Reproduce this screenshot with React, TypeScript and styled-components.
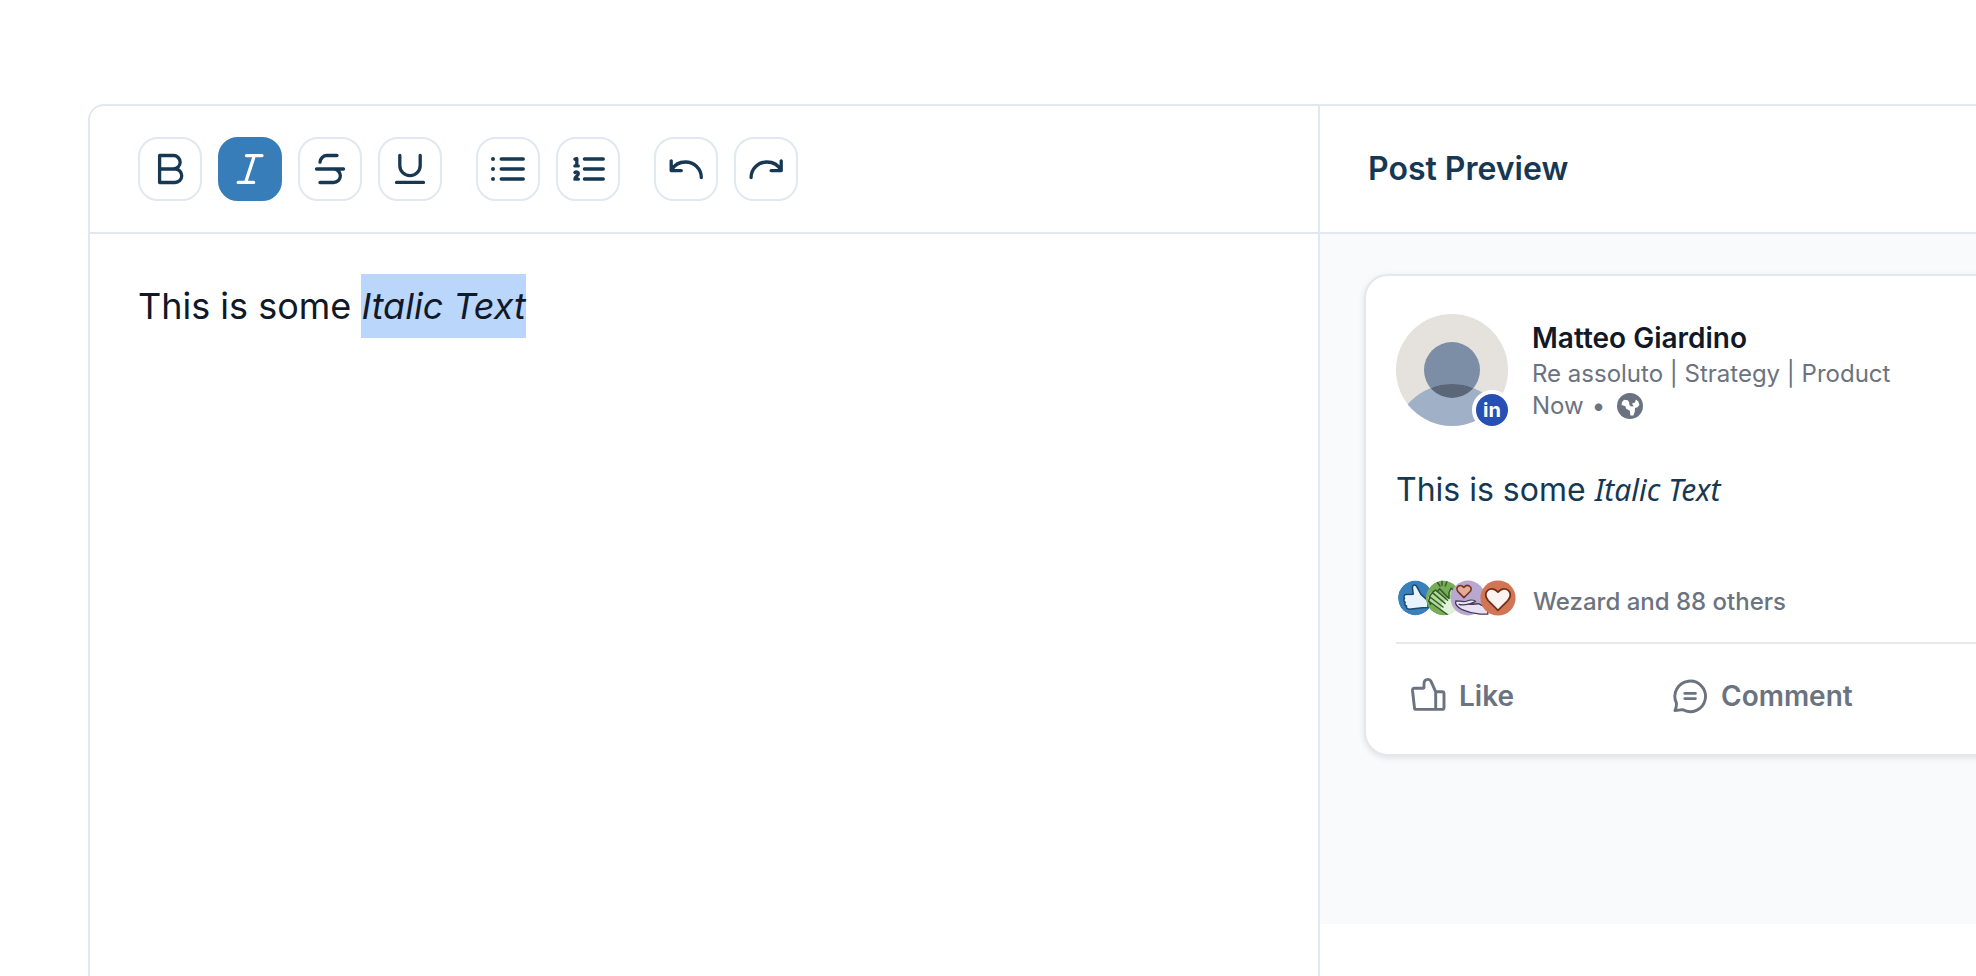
import React from "react";
import styled, { createGlobalStyle } from "styled-components";

const GlobalStyle = createGlobalStyle`
  *, *::before, *::after { box-sizing: border-box; }
  html, body, #root { height: 100%; }
  body {
    margin: 0;
    background: #ffffff;
    font-family: Inter, "Liberation Sans", sans-serif;
    color: #111827;
    overflow: hidden;
  }
  h2, p { margin: 0; }
  button { font: inherit; cursor: pointer; }
  svg { display: block; flex: none; }
`;

const Page = styled.main`
  min-height: 100vh;
  padding: 104px 0 0 88px;
  display: flex;
`;

const Workspace = styled.div`
  flex: 1;
  display: grid;
  grid-template-columns: minmax(0, 15fr) minmax(0, 8fr);
  border: 2px solid #e2e8f0;
  border-width: 2px 0 0 2px;
  border-top-left-radius: 16px;
`;

const EditorColumn = styled.section`
  border-right: 2px solid #e2e8f0;
`;

const PreviewColumn = styled.section`
  overflow: hidden;
`;

const Bar = styled.div`
  display: flex;
  align-items: center;
  gap: 34px;
  height: 128px;
  padding: 0 48px;
  border-bottom: 2px solid #e2e8f0;
`;

const ToolGroup = styled.div`
  display: flex;
  gap: 16px;
`;

const ToolButton = styled.button<{ $active?: boolean }>`
  display: grid;
  place-items: center;
  width: 64px;
  height: 64px;
  padding: 0;
  border: 2px solid ${(p) => (p.$active ? "#377dba" : "#e2e8f0")};
  border-radius: 20px;
  background: ${(p) => (p.$active ? "#377dba" : "#ffffff")};
  color: ${(p) => (p.$active ? "#ffffff" : "#163853")};
`;

const Editor = styled.div`
  padding: 40px 48px;
  font-size: 36px;
  line-height: 64px;
  outline: none;
`;

const Selected = styled.em`
  display: inline-block;
  background: #bad6fb;
`;

const Title = styled.h2`
  font-size: 32px;
  line-height: 40px;
  font-weight: 600;
  color: #163853;
`;

const PreviewArea = styled.div`
  height: 690px;
  padding: 40px 0 0 44px;
  background: #f8fafc;
`;

const Card = styled.article`
  margin-right: -32px;
  padding: 38px 30px 36px;
  border: 2px solid #e5e7eb;
  border-radius: 24px;
  background: #ffffff;
  box-shadow: 0 2px 6px rgba(0, 0, 0, 0.1);
`;

const Author = styled.header`
  display: flex;
  align-items: center;
  gap: 24px;
`;

const AvatarBox = styled.div`
  position: relative;
`;

const Badge = styled.span`
  position: absolute;
  right: -4px;
  bottom: -4px;
  display: grid;
  place-items: center;
  width: 40px;
  height: 40px;
  border: 4px solid #ffffff;
  border-radius: 50%;
  background: #2650b4;
  color: #ffffff;
  font-size: 20px;
  line-height: 24px;
  font-weight: 700;
`;

const Name = styled.p`
  font-size: 28px;
  line-height: 40px;
  font-weight: 600;
`;

const Meta = styled.p`
  display: flex;
  align-items: center;
  gap: 8px;
  font-size: 24px;
  line-height: 32px;
  color: #6b7280;

  svg {
    margin-left: 4px;
  }
`;

const PostText = styled.p`
  margin-top: 40px;
  font-size: 32px;
  line-height: 48px;
  color: #163853;
`;

const PostItalic = styled.em`
  font-family: "Noto Sans", sans-serif;
  font-size: 30px;
  line-height: 32px;
`;

const Reactions = styled.div`
  display: flex;
  gap: 16px;
  margin-top: 66px;
  padding: 0 0 18px 2px;
  border-bottom: 2px solid #e5e7eb;
  font-size: 24px;
  line-height: 44px;
  font-weight: 500;
  color: #6b7280;
`;

const Actions = styled.div`
  display: grid;
  grid-template-columns: repeat(2, 262px);
  padding: 30px 0 0 13px;
`;

const Action = styled.button`
  display: flex;
  align-items: center;
  gap: 12px;
  padding: 0;
  border: 0;
  background: none;
  color: #6b7280;
  font-size: 28px;
  line-height: 44px;
  font-weight: 600;
`;

function ToolIcon({ children }: { children: React.ReactNode }) {
  return (
    <svg width="40" height="40" viewBox="0 0 40 40" fill="none" stroke="currentColor" strokeWidth="3.3" strokeLinecap="round" strokeLinejoin="round" aria-hidden="true">
      {children}
    </svg>
  );
}

const groups = [
  [
    { label: "Bold", icon: <path d="M9.6 6.5H23.4a6.7 6.7 0 0 1 0 13.5H9.6zM9.6 20H25a6.7 6.7 0 0 1 0 13.5H9.6z" /> },
    { label: "Italic", active: true, icon: <path d="M16.5 6.6H32M8.2 33.4H23.6M24.4 6.6 15.6 33.4" /> },
    { label: "Strikethrough", icon: <path d="M27 6.5H17A7 7 0 0 0 10 13.2M6.5 20H33.5M23.6 20a6.7 6.7 0 0 1 0 13.5H10" /> },
    { label: "Underline", icon: <path d="M9.8 6.5V16.4a10.2 10.2 0 0 0 20.4 0V6.5M6.5 33.4H33.5" /> },
  ],
  [
    {
      label: "Bullet list",
      icon: (
        <>
          <path d="M13.2 10H35.3M13.2 20H35.3M13.2 30H35.3" />
          <path d="M5 10h0M5 20h0M5 30h0" strokeWidth="4" />
        </>
      ),
    },
    {
      label: "Numbered list",
      icon: (
        <>
          <path d="M16.4 10H35.3M16.4 20H35.3M16.4 30H35.3" />
          <path d="M6.9 10.2 8.8 9.7V16.8M6.9 16.9H10.3M6.9 23.5C8 22.5 10.4 22.8 10.3 24.7 10.2 26.8 6.9 27.3 6.9 30.2H10.4" />
        </>
      ),
    },
  ],
  [
    { label: "Undo", icon: <path d="M5.2 11.8V21.6H15.3M5.2 21.6C8 16.2 13.5 13 19.5 13 28.2 13 35.3 19.8 35.3 28.5" /> },
    { label: "Redo", icon: <path d="M35.2 11.8V21.6H25.1M35.2 21.6C32.4 16.2 26.9 13 20.9 13 12.2 13 5.1 19.8 5.1 28.5" /> },
  ],
];

function Avatar() {
  return (
    <svg width="112" height="112" viewBox="0 0 112 112" aria-hidden="true">
      <defs>
        <clipPath id="avatar-round"><circle cx="56" cy="56" r="56" /></clipPath>
        <clipPath id="avatar-head"><circle cx="56" cy="56" r="28" /></clipPath>
      </defs>
      <g clipPath="url(#avatar-round)">
        <rect width="112" height="112" fill="#e5e2dd" />
        <circle cx="56" cy="56" r="28" fill="#7b8ea5" />
        <circle cx="56" cy="128.4" r="58.4" fill="#a0b0c7" />
        <circle cx="56" cy="128.4" r="58.4" fill="#5a6779" clipPath="url(#avatar-head)" />
      </g>
    </svg>
  );
}

function Globe() {
  return (
    <svg width="26" height="26" viewBox="0 0 26 26" aria-hidden="true">
      <circle cx="13" cy="13" r="13" fill="#6b7280" />
      <path d="M4.8 9.4 7 6.8 10.8 7.2 12.2 9.4 12.4 12 14 13.6 16.6 13.2 15 10.6 18 9.4 18.8 6.6 21.4 8.4 22.4 12 20.4 14.2 18 15 17.8 18.6 16.4 22.4H13.4L12.8 17.8 9.2 15.8 8.4 13.2 4.6 12z" fill="#fff" />
    </svg>
  );
}

function ReactionIcons() {
  return (
    <svg width="119" height="36" viewBox="0 0 119 36" strokeLinecap="round" strokeLinejoin="round" aria-hidden="true">
      <defs>
        <clipPath id="r-like"><circle cx="17.4" cy="18" r="17.4" /></clipPath>
        <clipPath id="r-clap"><circle cx="45.3" cy="18" r="17.4" /></clipPath>
      </defs>
      <g clipPath="url(#r-like)">
        <circle cx="17.4" cy="18" r="17.4" fill="#3a80ba" />
        <path d="M15.2 14.2 14.4 7.4C14.6 4.4 17.4 4.2 18.6 6.4L23 14.4 29.6 20.4 30 27.6 24.5 27.8 11 29.2C8.6 29 8 27.2 8.6 26 6.8 25.4 6.4 23.6 7.2 22.4 5.6 21.4 5.4 19.4 6.6 18.4 5.2 16.8 6 14.8 8 14.6z" fill="#e7f3fd" stroke="#1a4871" strokeWidth="1.5" />
      </g>
      <g clipPath="url(#r-clap)">
        <circle cx="45.3" cy="18" r="17.4" fill="#78ac59" />
        <path d="M30 17 33 12 37 11 51 20 50.6 10.6 53.4 8 55.4 13.4 63 20V36H53L42 30 30 22z" fill="#b4d99c" />
        <path d="M44 23 50 18 52 19 56 15 64 20V37H54L43 29.5z" fill="#e0f3d6" />
        <path d="M34.4 12.4 37.6 10 49.5 20.2M31.4 16.6 34.4 12.6 47 23.4M30.6 21.2 32 17 45 27M32.6 24.4 31 21.4 50 35M39.6 11.4 41.6 8.8 51 18.4V12.4L53 8.4 55.4 9.6 55.4 14.4" fill="none" stroke="#315c28" strokeWidth="1.5" />
        <path d="M39.5 2.5 42 6.2M44 .8V5.2M48.8 2 47.2 6" fill="none" stroke="#315c28" strokeWidth="1.4" />
      </g>
      <circle cx="70" cy="18" r="17.4" fill="#b7a8d0" />
      <path d="M65.9 17.6 60 11.6C56.5 7.6 62 3.1 65.8 7.4 69.3 3 75.3 7 72.4 11.2z" fill="#e6ab96" stroke="#77341f" strokeWidth="1.6" />
      <path d="M57.8 20.8C62 20.6 65 22.6 69 21 72 19.8 76 19.8 77.6 21.4 75.5 22.7 72.6 23.5 70.8 24.2 75 24.8 78.6 23.4 81 23.8L89.8 28.4V34.2H82C74 33.5 71.6 32.8 66 30.4 62.8 29 58.5 25.8 57.6 23.4z" fill="#e8e2f3" stroke="#473957" strokeWidth="1.3" />
      <path d="M61 24.4C64 25.4 67 25 70.8 24.2" fill="none" stroke="#473957" strokeWidth="1.2" />
      <circle cx="100" cy="18" r="17.6" fill="#d07655" />
      <path d="M100 30.4 90.2 20.7C83 12.8 92.8 3.8 100 12.1 107.2 3.8 117 12.8 109.8 20.7z" fill="#fdf3f0" stroke="#742e17" strokeWidth="1.8" />
    </svg>
  );
}

function LikeIcon() {
  return (
    <svg width="38" height="38" viewBox="0 0 38 38" fill="none" stroke="currentColor" strokeWidth="2.9" strokeLinejoin="round" strokeLinecap="round" aria-hidden="true">
      <path d="M5.6 31.8 3.5 13.5Q3.3 11.3 5.5 11.3H13.8Q15 11.3 15 10V7Q15 2.4 19 2.4 21 2.4 22 4.3L26.7 14.8V31.8Q26.7 32.4 25.5 32.4H6.3Q5.7 32.4 5.6 31.8zM26.7 14.8H33Q35 14.8 35 16.8V30.4Q35 32.4 33 32.4H26" />
    </svg>
  );
}

function CommentIcon() {
  return (
    <svg width="38" height="38" viewBox="0 0 38 38" fill="none" stroke="currentColor" strokeWidth="2.9" strokeLinejoin="round" strokeLinecap="round" aria-hidden="true">
      <path d="M5.4 26A15.3 15.3 0 1 1 11.5 32.6L4 33.6Q5.8 29.5 5.4 26zM13.8 16.4H24.4M13.8 21.6H24.4" />
    </svg>
  );
}

export default function App() {
  return (
    <>
      <GlobalStyle />
      <Page>
        <Workspace>
          <EditorColumn aria-label="Editor">
            <Bar role="toolbar" aria-label="Text formatting">
              {groups.map((group, i) => (
                <ToolGroup key={i}>
                  {group.map((tool) => (
                    <ToolButton key={tool.label} type="button" aria-label={tool.label} $active={"active" in tool && tool.active}>
                      <ToolIcon>{tool.icon}</ToolIcon>
                    </ToolButton>
                  ))}
                </ToolGroup>
              ))}
            </Bar>
            <Editor role="textbox" aria-label="Post text" aria-multiline="true" contentEditable suppressContentEditableWarning spellCheck={false}>
              This is some <Selected>Italic Text</Selected>
            </Editor>
          </EditorColumn>
          <PreviewColumn>
            <Bar>
              <Title>Post Preview</Title>
            </Bar>
            <PreviewArea>
              <Card>
                <Author>
                  <AvatarBox>
                    <Avatar />
                    <Badge>in</Badge>
                  </AvatarBox>
                  <div>
                    <Name>Matteo Giardino</Name>
                    <Meta>Re assoluto | Strategy | Product</Meta>
                    <Meta>
                      <span>Now</span>
                      <span>•</span>
                      <Globe />
                    </Meta>
                  </div>
                </Author>
                <PostText>
                  This is some <PostItalic>Italic Text</PostItalic>
                </PostText>
                <Reactions>
                  <ReactionIcons />
                  <span>Wezard and 88 others</span>
                </Reactions>
                <Actions>
                  <Action type="button">
                    <LikeIcon />
                    Like
                  </Action>
                  <Action type="button">
                    <CommentIcon />
                    Comment
                  </Action>
                </Actions>
              </Card>
            </PreviewArea>
          </PreviewColumn>
        </Workspace>
      </Page>
    </>
  );
}
